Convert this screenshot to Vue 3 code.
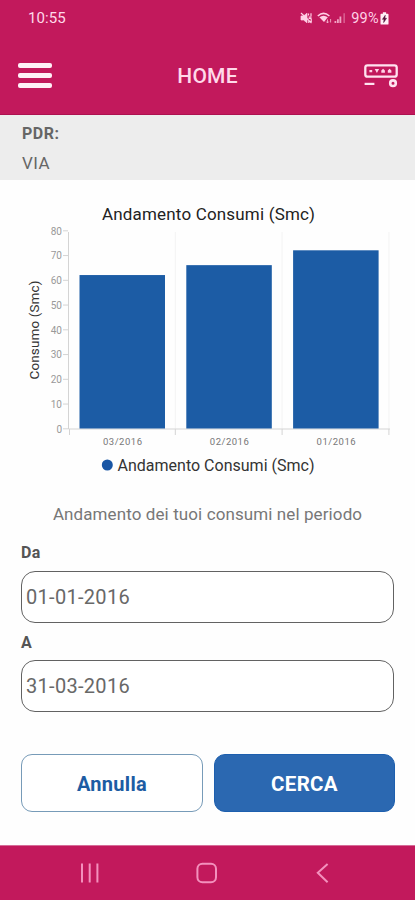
<script setup>
import { ref } from 'vue'

const title = 'Andamento Consumi (Smc)'
const from = ref('01-01-2016')
const to = ref('31-03-2016')

const baseY = 248.5
const unit = 2.475
const slot = 106.8
const ticks = [0, 10, 20, 30, 40, 50, 60, 70, 80].map((v) => ({ v, y: baseY - v * unit }))
const bars = [
  { label: '03/2016', value: 62 },
  { label: '02/2016', value: 66 },
  { label: '01/2016', value: 72 },
].map((b, i) => ({
  ...b,
  x: 79.5 + i * slot,
  y: baseY - b.value * unit,
  h: b.value * unit,
  cx: 122.5 + i * slot,
}))
</script>

<template>
  <div class="screen">
    <header class="top">
      <div class="status">
        <span class="clock">10:55</span>
        <div class="indicators">
          <svg class="mute" width="13" height="12" viewBox="0 0 13 12">
            <path d="M1 4h2.6L7 1.2v9.6L3.6 8H1z" fill="currentColor" stroke="currentColor" stroke-width=".7" />
            <path d="M1 1l10.5 10M8.5 1.5v2M11 1.2v3M8.7 5h2.8M8.6 6.4h3M11.2 7v3M8.8 8v3" fill="none" stroke="currentColor" stroke-width="1.2" />
          </svg>
          <svg class="wifi" width="16" height="12" viewBox="0 0 16 12">
            <path d="M.8 4Q6.5-1.3 12.4 4" fill="none" stroke="currentColor" stroke-width="1.5" />
            <path d="M2.4 5.3Q6.6 2 10.8 5.3L7 10z" fill="currentColor" />
            <path d="M10.5 7.5v3.2M9.2 9.5l1.3 1.5 1.3-1.5M13.6 10.5V7" fill="none" stroke="currentColor" stroke-width="1" opacity=".7" />
          </svg>
          <svg class="signal" width="12" height="12" viewBox="0 0 12 12" fill="currentColor">
            <path d="M.5 9h1.8v2H.5zM3 7.3h1.8V11H3zM5.5 4.6h1.8V11H5.5z" opacity=".75" />
            <path d="M9.5 1.2h1.3V11H9.5z" opacity=".45" />
          </svg>
          <span class="percent">99%</span>
          <svg class="battery" width="9" height="13" viewBox="0 0 8 12">
            <path d="M2.5.3h3v1.2H7q.7 0 .7.8v8.5q0 .8-.7.8H1q-.7 0-.7-.8V2.3q0-.8.7-.8h1.5z" fill="#fff0f7" />
            <path d="M4.7 3L2.1 6.8h1.5L3.2 9.8l2.7-4H4.3z" fill="#54123c" stroke="#54123c" stroke-width=".5" />
          </svg>
        </div>
      </div>
      <div class="bar">
        <div class="menu"><i></i><i></i><i></i></div>
        <h1>HOME</h1>
        <svg class="meter" width="36" height="26" viewBox="0 0 36 26">
          <rect x="2.3" y="2.3" width="31.4" height="11.4" rx="2.2" fill="none" stroke="#ffe3f0" stroke-width="2.3" />
          <path d="M6.4 7h2.8v2.3H6.4zM11.7 6h4.4l-2.2 3.9zM18.3 9.8V7.6l1.8-1.8 1.8 1.8v2.2zM24.8 9.8V7.6l1.8-1.8 1.8 1.8v2.2z" fill="#ffd3e7" />
          <path d="M1.6 20.9h9.8" stroke="#ffe3f0" stroke-width="2.2" />
          <circle cx="30" cy="20.2" r="2.8" fill="none" stroke="#ffe3f0" stroke-width="2.6" />
        </svg>
      </div>
    </header>

    <section class="supply">
      <strong>PDR:</strong>
      <span>VIA</span>
    </section>

    <svg class="chart" width="415" height="311" viewBox="0 0 415 311">
      <text x="102" y="40" class="chart-title" textLength="213">{{ title }}</text>
      <g class="grid">
        <path v-for="i in 3" :key="i" :d="`M${68.5 + i * slot} 52V249`" />
      </g>
      <g class="axis">
        <path d="M68.5 52V249H390" />
        <path v-for="t in ticks" :key="t.v" :d="`M63 ${t.y + 0.3}h5`" />
        <path v-for="i in 4" :key="i" :d="`M${69.5 + (i - 1) * slot - (i > 1 ? 1 : 0)} 249v6`" />
      </g>
      <text v-for="t in ticks" :key="t.v" x="62" :y="t.y + 4" class="tick" text-anchor="end">{{ t.v }}</text>
      <g v-for="b in bars" :key="b.label">
        <rect :x="b.x" :y="b.y" width="85.5" :height="b.h" fill="#1c5ca5" />
        <text :x="b.cx" y="264.5" class="month" text-anchor="middle" textLength="39">{{ b.label }}</text>
      </g>
      <text transform="translate(39 199.5) rotate(-90)" class="axis-title" textLength="99">Consumo (Smc)</text>
      <circle cx="107.3" cy="285" r="5.5" fill="#1956a5" />
      <text x="117.5" y="291" class="legend" textLength="197">{{ title }}</text>
    </svg>

    <form class="search" @submit.prevent>
      <p>Andamento dei tuoi consumi nel periodo</p>
      <label for="from">Da</label>
      <input id="from" v-model="from" type="text" />
      <label for="to">A</label>
      <input id="to" v-model="to" type="text" />
      <div class="actions">
        <button type="button" class="cancel">Annulla</button>
        <button type="submit" class="submit">CERCA</button>
      </div>
    </form>

    <nav class="system">
      <svg width="22" height="22" viewBox="0 0 22 22">
        <path d="M3 1.5v19M10.7 1.5v19M18.4 1.5v19" />
      </svg>
      <svg width="22" height="22" viewBox="0 0 22 22">
        <rect x="1.4" y="1.8" width="18.6" height="18.4" rx="5" />
      </svg>
      <svg width="22" height="22" viewBox="0 0 22 22">
        <path d="M15.6 2L5.8 10.8l9.8 9.4" />
      </svg>
    </nav>
  </div>
</template>

<style>
body {
  margin: 0;
  background: #fefefe;
}
</style>

<style scoped>
.screen {
  box-sizing: border-box;
  display: flex;
  flex-direction: column;
  width: 415px;
  height: 900px;
  overflow: hidden;
  font-family: Roboto, "Liberation Sans", sans-serif;
  color: #666;
  background: #fefefe;
}
.top {
  height: 115px;
  box-sizing: border-box;
  background: #c2195c;
  border-bottom: 1px solid #ad1150;
  color: #ffd9ea;
}
.status {
  height: 36px;
  display: flex;
  align-items: center;
  justify-content: space-between;
  padding: 0 26px 0 28px;
}
.clock {
  font-size: 15px;
  letter-spacing: 0.1px;
}
.indicators {
  display: flex;
  align-items: center;
  color: #ffd0e6;
}
.wifi {
  margin-left: 4px;
}
.signal {
  margin-left: 1px;
}
.percent {
  font-size: 14.5px;
  margin-left: 5px;
  letter-spacing: 0.3px;
}
.battery {
  margin-left: 1px;
}
.bar {
  height: 78px;
  display: grid;
  grid-template-columns: 60px 1fr 60px;
  align-items: center;
}
.menu {
  display: grid;
  gap: 5.5px;
  width: 34px;
  margin: 1px 0 0 18px;
}
.menu i {
  height: 4.4px;
  border-radius: 2px;
  background: #fff0f7;
}
h1 {
  margin: 2px 0 0;
  text-align: center;
  font-size: 21px;
  font-weight: 500;
  letter-spacing: 0.2px;
}
.meter {
  margin: 2px 0 0 8px;
}
.supply {
  height: 65px;
  box-sizing: border-box;
  padding: 9px 22px 0;
  display: flex;
  flex-direction: column;
  background: #ededed;
  font-size: 17px;
  line-height: 20px;
}
.supply strong {
  font-size: 16px;
  font-weight: 700;
  letter-spacing: 0.5px;
}
.supply span {
  margin-top: 9px;
  letter-spacing: 0.5px;
}
.chart {
  display: block;
  flex: none;
}
.chart-title {
  font-size: 17px;
  fill: #222;
}
.legend {
  font-size: 16px;
  fill: #333;
}
.axis-title {
  font-size: 13.5px;
  fill: #333;
}
.tick {
  font-size: 10px;
  fill: #999;
}
.month {
  font-size: 9.5px;
  fill: #777;
}
.grid path {
  stroke: #f3f3f3;
}
.axis path {
  fill: none;
  stroke: #d4d4d4;
}
.search {
  display: flex;
  flex-direction: column;
  padding: 12px 21px 0;
}
.search p {
  margin: 0 0 17px;
  text-align: center;
  font-size: 17px;
  line-height: 22px;
  letter-spacing: 0.1px;
  color: #777;
}
label {
  height: 28px;
  line-height: 22px;
  font-size: 16px;
  font-weight: 700;
  letter-spacing: 0.3px;
  color: #555;
}
label + input {
  margin-top: 0.5px;
}
input {
  box-sizing: border-box;
  width: 373px;
  height: 52px;
  margin: 0 0 9px;
  padding: 0 4px;
  border: 1.4px solid #626262;
  border-radius: 14px;
  outline: none;
  background: #fff;
  font: 20px Roboto, "Liberation Sans", sans-serif;
  letter-spacing: 0.3px;
  color: #686868;
}
.actions {
  display: grid;
  grid-template-columns: 182px 181px;
  gap: 11px;
  margin-top: 33px;
}
button {
  height: 58px;
  padding: 1px 0 0;
  border-radius: 11px;
  font: 700 20px Roboto, "Liberation Sans", sans-serif;
}
.cancel {
  background: #fff;
  border: 1px solid #779bb8;
  letter-spacing: 0.3px;
  color: #1d5ca3;
}
.submit {
  background: #2b68b1;
  border: 1px solid #1d5fae;
  font-size: 20.5px;
  letter-spacing: 0.3px;
  color: #fff;
}
.system {
  display: flex;
  justify-content: space-between;
  align-items: center;
  box-sizing: border-box;
  height: 55px;
  margin-top: auto;
  padding: 0 81px 0 79px;
  background: #c2195c;
  border-top: 1px solid #d66c98;
}
.system svg {
  fill: none;
  stroke: #f391bd;
  stroke-width: 2;
}
</style>
